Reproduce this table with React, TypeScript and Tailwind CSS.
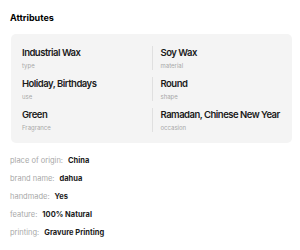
const specs = [
  { value: "Industrial Wax", label: "type" },
  { value: "Soy Wax", label: "material" },
  { value: "Holiday, Birthdays", label: "use" },
  { value: "Round", label: "shape" },
  { value: "Green", label: "Fragrance" },
  { value: "Ramadan, Chinese New Year", label: "occasion" },
];

const details = [
  { label: "place of origin:", value: "China" },
  { label: "brand name:", value: "dahua" },
  { label: "handmade:", value: "Yes" },
  { label: "feature:", value: "100% Natural" },
  { label: "printing:", value: "Gravure Printing" },
];

export default function App() {
  return (
    <div className="w-[300px] h-[250px] bg-white overflow-hidden px-[10px] pt-[12px] font-['Inter',sans-serif] text-[#222]">
      <h3 className="text-[9px] leading-[12px] font-bold text-black">Attributes</h3>

      {/* Key attributes card */}
      <div className="mt-[10px] ml-[1px] w-[281px] rounded-[5px] bg-[#f4f4f4] px-[11px] pt-[12px] pb-[11px] grid grid-cols-2 gap-y-[7px]">
        {specs.map((s, i) => (
          <div
            key={s.label}
            className={i % 2 === 1 ? "border-l border-[#e0e0e0] pl-[8px]" : ""}
          >
            <div className="text-[9.5px] leading-[13px] font-semibold tracking-[-0.5px] text-[#1a1a1a] whitespace-nowrap">
              {s.value}
            </div>
            <div className="mt-[2px] text-[6px] leading-[9px] text-[#a8a8a8]">{s.label}</div>
          </div>
        ))}
      </div>

      {/* Other attributes */}
      <div className="mt-[13px] flex flex-col gap-[8px]">
        {details.map((d) => (
          <div key={d.label} className="flex items-baseline gap-[5px] text-[7.5px] leading-[10px]">
            <span className="text-[#a8a8a8]">{d.label}</span>
            <span className="font-bold text-[#1a1a1a]">{d.value}</span>
          </div>
        ))}
      </div>
    </div>
  );
}
